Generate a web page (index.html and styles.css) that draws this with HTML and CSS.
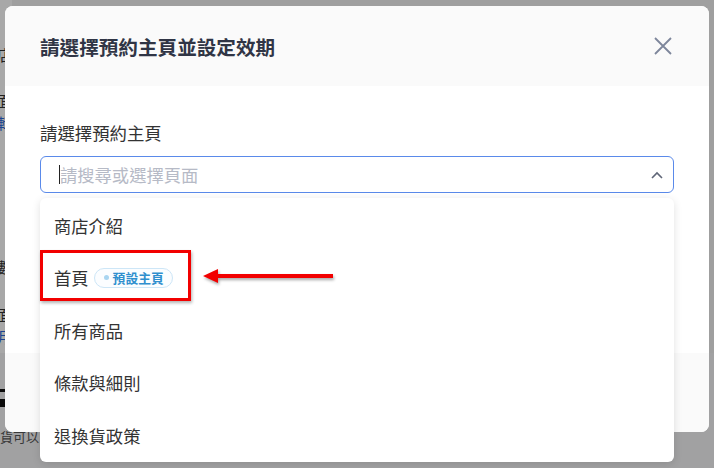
FILE: index.html
```html
<!DOCTYPE html>
<html lang="zh-Hant">
<head>
    <meta charset="UTF-8">
    <meta name="viewport" content="width=device-width, initial-scale=1.0">
    <title>請選擇預約主頁並設定效期</title>
    <link rel="stylesheet" href="styles.css">
</head>
<body>
    <!-- page behind the dialog -->
    <div class="page">
        <div class="page-side">
            <div class="ps-row ps-a">商店</div>
            <div class="ps-row ps-b">頁面</div>
            <div class="ps-row ps-link">編輯</div>
            <div class="ps-line"></div>
            <div class="ps-row ps-c">參數</div>
            <div class="ps-row ps-d">頁面</div>
            <div class="ps-row ps-link">期月</div>
            <div class="ps-line"></div>
        </div>
        <div class="page-foot">
            <div class="pf-mark"></div>
            <div class="pf-text">貨可以</div>
        </div>
    </div>

    <div class="overlay">
        <div class="modal">
            <div class="modal-header">
                <h2>請選擇預約主頁並設定效期</h2>
                <button class="close-btn" aria-label="close">
                    <svg width="18" height="18" viewBox="0 0 18 18">
                        <path d="M1 1 L17 17 M17 1 L1 17" stroke="#7d869b" stroke-width="1.8" fill="none"/>
                    </svg>
                </button>
            </div>

            <div class="modal-body">
                <label class="field-label">請選擇預約主頁</label>
                <div class="select-wrap">
                    <div class="select-input">
                        <span class="caret"></span>
                        <span class="placeholder">請搜尋或選擇頁面</span>
                        <svg class="chevron" width="12" height="8" viewBox="0 0 12 8">
                            <path d="M1 7 L6 2 L11 7" stroke="#5f6677" stroke-width="1.6" fill="none"/>
                        </svg>
                    </div>

                    <ul class="dropdown">
                        <li>商店介紹</li>
                        <li>首頁 <span class="badge"><i class="badge-dot"></i>預設主頁</span></li>
                        <li>所有商品</li>
                        <li>條款與細則</li>
                        <li>退換貨政策</li>
                    </ul>

                    <div class="highlight-box"></div>
                    <div class="pointer-arrow">
                        <span class="arrow-head"></span>
                        <span class="arrow-line"></span>
                    </div>
                </div>
            </div>

            <div class="modal-footer"></div>
        </div>
    </div>
</body>
</html>
```

FILE: styles.css
```css
* {
    margin: 0;
    padding: 0;
    box-sizing: border-box;
}

body {
    font-family: "Noto Sans", "Noto Sans CJK TC", sans-serif;
    width: 714px;
    height: 468px;
    overflow: hidden;
    background: #f2f2f2;
    position: relative;
}

/* background page (only its left strip shows) */
.page {
    height: 468px;
    display: flex;
    flex-direction: column;
}

.page-side {
    height: 353px;
    background: #ffffff;
    padding-top: 44px;
    display: flex;
    flex-direction: column;
    align-items: flex-end;
    width: 12px;
    overflow: hidden;
    font-size: 15px;
    color: #333;
    white-space: nowrap;
}

.ps-row {
    line-height: 22px;
    direction: rtl;
}

.ps-b { margin-top: 24px; }
.ps-c { margin-top: 86px; }
.ps-d { margin-top: 26px; }

.ps-link {
    color: #2b66d9;
}

.ps-line {
    width: 12px;
    height: 1px;
    background: #c8ccd6;
    margin: 6px 0 30px;
}

.page-foot {
    flex: 1;
    background: #f4f4f6;
    padding-top: 36px;
}

.pf-mark {
    width: 6px;
    height: 18px;
    border-top: 3px solid #111;
    border-bottom: 8px solid #111;
}

.pf-text {
    width: 40px;
    overflow: hidden;
    font-size: 13px;
    color: #555;
    margin-top: 20px;
    white-space: nowrap;
}

.overlay {
    position: absolute;
    inset: 0;
    background: rgba(0, 0, 0, 0.34);
    padding: 6px 5px 0 5px;
}

/* dialog */
.modal {
    width: 704px;
    height: 426px;
    background: #fff;
    border-radius: 8px;
    display: flex;
    flex-direction: column;
}

.modal-header {
    height: 80px;
    background: #fafafa;
    border-radius: 8px 8px 0 0;
    display: flex;
    align-items: center;
    justify-content: space-between;
    padding: 0 37px 0 35px;
}

.modal-header h2 {
    font-family: "Noto Sans CJK TC", sans-serif;
    font-size: 19.6px;
    font-weight: 700;
    color: #303545;
}

.close-btn {
    background: none;
    border: none;
    display: flex;
    cursor: pointer;
}

.modal-body {
    flex: 1;
    padding: 35px 35px 0;
}

.field-label {
    display: block;
    font-family: "Noto Sans CJK TC", sans-serif;
    font-size: 17.4px;
    line-height: 24px;
    color: #333;
    margin-bottom: 11px;
}

.select-wrap {
    position: relative;
}

.select-input {
    height: 37px;
    border: 1px solid #5a8aea;
    border-radius: 6px;
    display: flex;
    align-items: center;
    padding: 0 10px 0 18px;
}

.caret {
    width: 1px;
    height: 19px;
    background: #222;
}

.placeholder {
    flex: 1;
    font-family: "Noto Sans CJK TC", sans-serif;
    font-size: 17.3px;
    color: #b6bac6;
}

.dropdown {
    position: absolute;
    top: 42px;
    left: 0;
    right: 0;
    list-style: none;
    background: #fff;
    border-radius: 6px;
    box-shadow: 0 2px 8px rgba(0, 0, 0, 0.12);
    padding-top: 1px;
    z-index: 2;
}

.dropdown li {
    height: 52.5px;
    display: flex;
    align-items: center;
    padding-left: 14px;
    font-family: "Noto Sans CJK TC", sans-serif;
    font-size: 17.3px;
    color: #333;
}

.badge {
    display: inline-flex;
    align-items: center;
    height: 20px;
    margin-left: 5px;
    padding: 0 8px 0 9px;
    border: 1px solid #cde6f7;
    border-radius: 10px;
    background: #fbfdff;
    font-size: 12.8px;
    font-weight: 700;
    color: #2f8fce;
}

.badge-dot {
    width: 5px;
    height: 5px;
    border-radius: 50%;
    background: #a9d5f1;
    margin-right: 4px;
}

/* annotation */
.highlight-box {
    position: absolute;
    top: 94px;
    left: 0;
    width: 151px;
    height: 51px;
    border: 3.5px solid #f20000;
    box-shadow: 1px 2px 3px rgba(0, 0, 0, 0.3);
    z-index: 3;
}

.pointer-arrow {
    position: absolute;
    top: 112px;
    left: 163px;
    width: 130px;
    height: 16px;
    display: flex;
    align-items: center;
    filter: drop-shadow(1px 2px 1.5px rgba(0, 0, 0, 0.35));
    z-index: 3;
}

.arrow-head {
    width: 0;
    height: 0;
    border-top: 7px solid transparent;
    border-bottom: 7px solid transparent;
    border-right: 15px solid #f20000;
}

.arrow-line {
    flex: 1;
    height: 3.5px;
    background: #f20000;
}

.modal-footer {
    height: 79px;
    background: #fafafa;
    border-radius: 0 0 8px 8px;
}
```
